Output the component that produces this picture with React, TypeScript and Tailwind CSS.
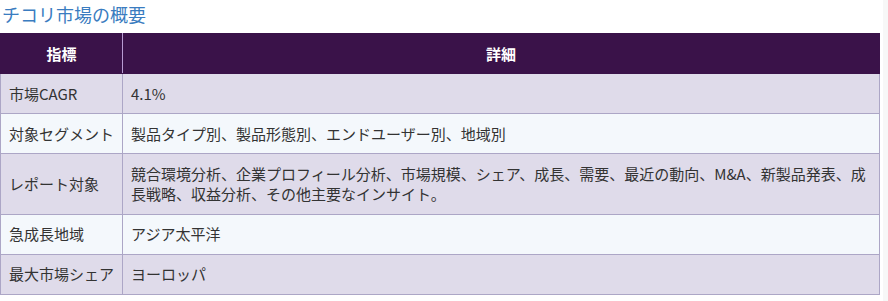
const rows = [
  { label: '市場CAGR', value: '4.1%' },
  { label: '対象セグメント', value: '製品タイプ別、製品形態別、エンドユーザー別、地域別' },
  {
    label: 'レポート対象',
    value:
      '競合環境分析、企業プロフィール分析、市場規模、シェア、成長、需要、最近の動向、M&A、新製品発表、成長戦略、収益分析、その他主要なインサイト。',
  },
  { label: '急成長地域', value: 'アジア太平洋' },
  { label: '最大市場シェア', value: 'ヨーロッパ' },
]

export default function App() {
  return (
    <div className="flex h-[301px] w-[888px] bg-[#f7f7f7] font-['Noto_Sans_CJK_JP',sans-serif]">
      <div className="w-[883px] bg-white">
        <h2 className="pl-[2px] pt-[1px] text-[18px] leading-[26px] font-normal text-[#3a7cc0]">
          チコリ市場の概要
        </h2>
        <table className="mt-[6px] w-[880px] border-collapse text-[15px] leading-[20px] text-[#333]">
          <thead>
            <tr className="bg-[#3a1249] text-white">
              <th className="w-[122px] border border-[#3a1249] border-r-[#b79bd2] px-2 py-[9.5px] text-center font-bold">
                指標
              </th>
              <th className="border border-[#3a1249] px-2 py-[9.5px] text-center font-bold">詳細</th>
            </tr>
          </thead>
          <tbody>
            {rows.map((r, i) => (
              <tr key={r.label} className={i % 2 === 0 ? 'bg-[#dfdbea]' : 'bg-[#f4f8fc]'}>
                <td className="border border-[#aca6c6] px-2 py-[9.6px] whitespace-nowrap">{r.label}</td>
                <td className="border border-[#aca6c6] px-2 py-[9.6px]">{r.value}</td>
              </tr>
            ))}
          </tbody>
        </table>
      </div>
    </div>
  )
}
